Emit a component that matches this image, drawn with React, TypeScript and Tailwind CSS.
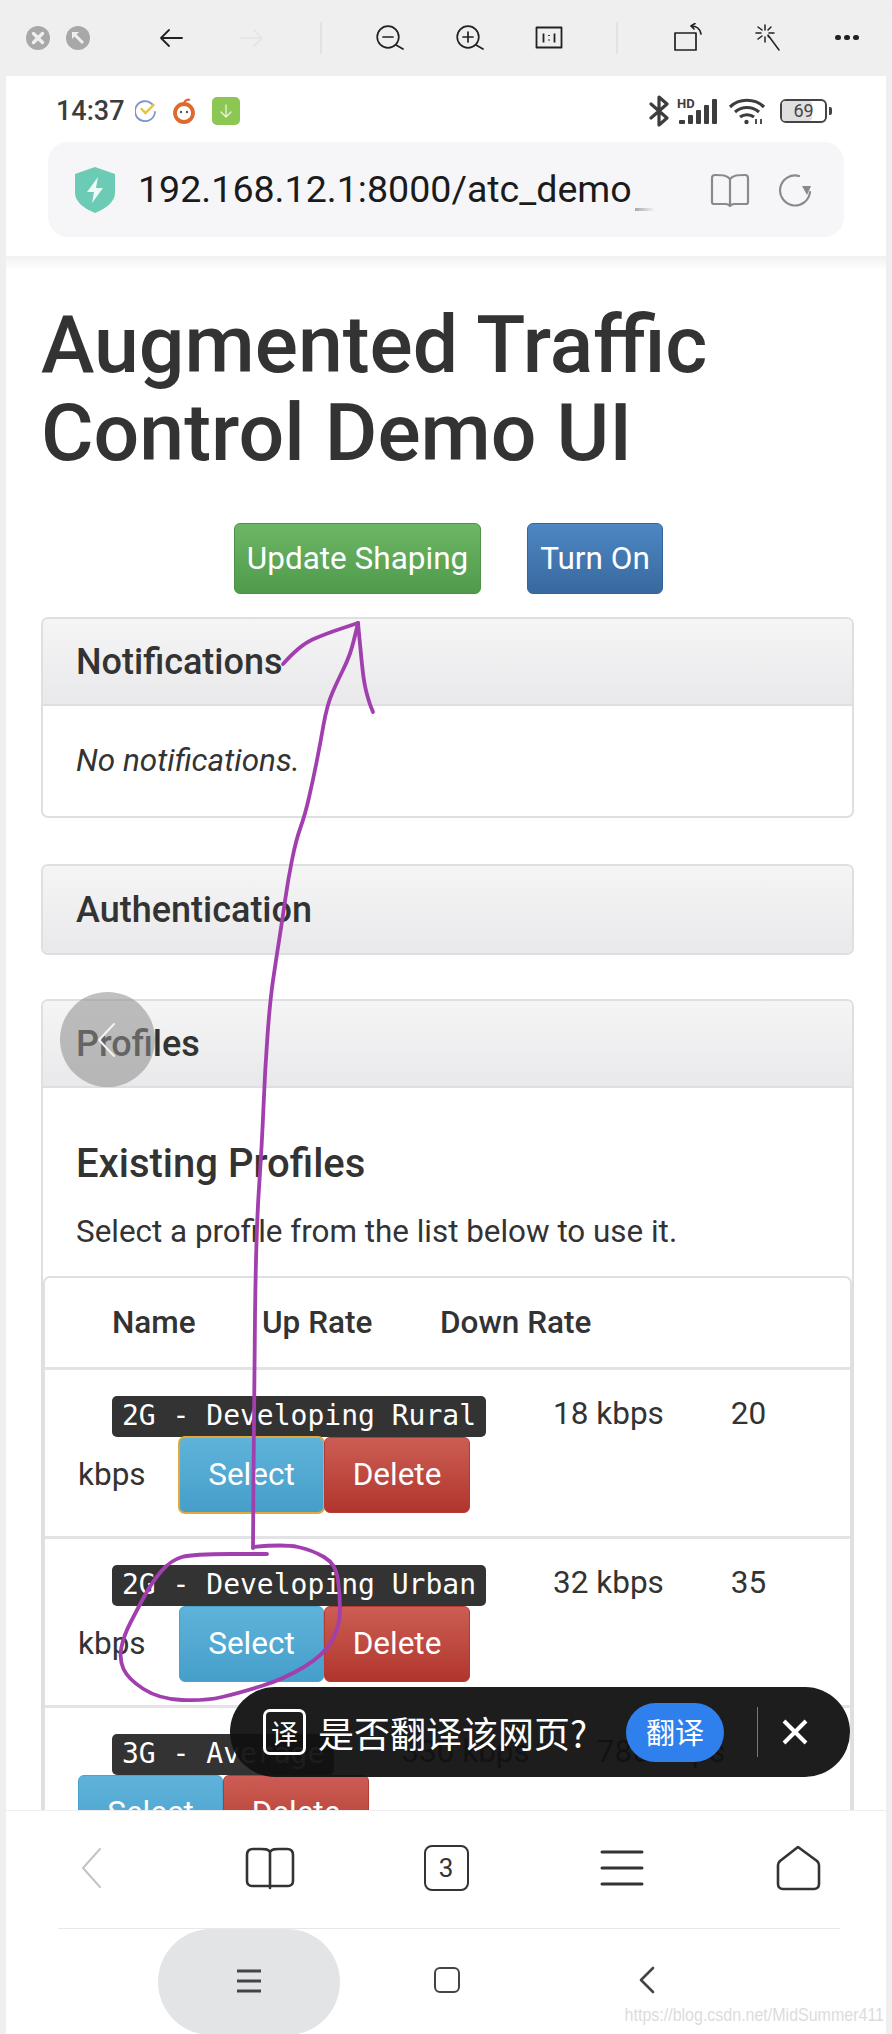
import type { ReactNode } from "react"

const purple = "#a23fae"

// smooth pen stroke through a list of points
function smooth(pts: number[][]) {
  let d = `M${pts[0][0]} ${pts[0][1]}`
  for (let i = 1; i < pts.length - 1; i++) {
    const mx = (pts[i][0] + pts[i + 1][0]) / 2
    const my = (pts[i][1] + pts[i + 1][1]) / 2
    d += ` Q${pts[i][0]} ${pts[i][1]} ${mx} ${my}`
  }
  const last = pts[pts.length - 1]
  return d + ` L${last[0]} ${last[1]}`
}

const stem = [
  [358, 623], [353, 645], [347, 662], [338, 680], [327, 705], [320, 745], [313, 780], [305, 815], [296, 840],
  [288, 880], [282, 922], [276, 960], [270, 1001], [265, 1070], [262, 1143], [256, 1233], [254, 1400], [253, 1548],
]
const loop = [
  [253, 1547], [284, 1544], [312, 1550], [336, 1564], [340, 1595], [340, 1626], [324, 1655], [284, 1679], [239, 1693],
  [205, 1701], [159, 1699], [128, 1679], [119, 1659], [124, 1635], [137, 1610], [152, 1582], [171, 1560], [193, 1554], [267, 1554],
]
const barbLeft = [[283, 664], [300, 645], [325, 634], [358, 623]]
const barbRight = [[358, 623], [361, 655], [364, 683], [369, 702], [373, 712]]

function Ink() {
  return (
    <svg className="absolute left-0 top-0 z-20 pointer-events-none" width={892} height={1810} fill="none" stroke={purple} strokeWidth={3.8} strokeLinecap="round" strokeLinejoin="round">
      <path d={smooth(stem)} />
      <path d={smooth(loop)} />
      <path d={smooth(barbLeft)} />
      <path d={smooth(barbRight)} />
    </svg>
  )
}

function Stroke({ w, h, sw = 2, color = "#222", children }: { w: number; h: number; sw?: number; color?: string; children: ReactNode }) {
  return (
    <svg width={w} height={h} viewBox={`0 0 ${w} ${h}`} fill="none" stroke={color} strokeWidth={sw} strokeLinecap="round" strokeLinejoin="round" className="shrink-0">
      {children}
    </svg>
  )
}

function Toolbar() {
  return (
    <div className="h-[76px] shrink-0 flex items-center pl-[24px] pb-[1px] rounded-t-[14px] bg-[#efefef]">
      <svg width={28} height={28} viewBox="0 0 28 28" className="shrink-0">
        <circle cx="14" cy="14" r="12" fill="#a8a8a8" />
        <path d="M9.5 9.5l9 9M18.5 9.5l-9 9" stroke="#efefef" strokeWidth={3.4} strokeLinecap="round" />
      </svg>
      <svg width={28} height={28} viewBox="0 0 28 28" className="shrink-0 ml-[12px]">
        <circle cx="14" cy="14" r="12" fill="#a8a8a8" />
        <path d="M9 9l10 10" stroke="#efefef" strokeWidth={3} />
        <path d="M8 8h7l-7 7z" fill="#efefef" />
      </svg>
      <div className="ml-[65px]">
        <Stroke w={28} h={24} sw={1.8}><path d="M25 12H5M12 4l-8 8 8 8" /></Stroke>
      </div>
      <div className="ml-[53px]">
        <Stroke w={28} h={24} sw={1.8} color="#e6e6e6"><path d="M3 12h20M16 4l8 8-8 8" /></Stroke>
      </div>
      <div className="ml-[54px] w-[2px] h-[32px] bg-[#e2e2e2]" />
      <div className="ml-[53px]">
        <Stroke w={30} h={28} sw={1.7}>
          <circle cx="13" cy="13" r="10.8" /><path d="M8 13h10M21 21l7 4" />
        </Stroke>
      </div>
      <div className="ml-[50px]">
        <Stroke w={30} h={28} sw={1.7}>
          <circle cx="13" cy="13" r="10.8" /><path d="M8 13h10M13 8v10M21 21l7 4" />
        </Stroke>
      </div>
      <div className="ml-[50px]">
        <Stroke w={28} h={24} sw={1.8}>
          <rect x="1.5" y="1.5" width="25" height="20" /><path d="M8.5 7.5v9M19.5 7.5v9M14 9v1M14 13.5v1" strokeLinecap="butt" />
        </Stroke>
      </div>
      <div className="ml-[53px] w-[2px] h-[32px] bg-[#e2e2e2]" />
      <div className="ml-[55px]">
        <Stroke w={32} h={30} sw={1.7}>
          <rect x="2" y="10" width="21" height="17" /><path d="M18 3c5 0 9 2 10 8M18 3l4-2.5M18 3l3 3" />
        </Stroke>
      </div>
      <div className="ml-[50px]">
        <Stroke w={26} h={28} sw={1.5}>
          <path d="M10 1v5M10 13v5M1 9h5M14 9h5M3 3l4 3M13 12l3 3M16 3l-3 3M3 15l4-3M13 11l11 15" />
        </Stroke>
      </div>
      <div className="ml-[54px] flex gap-[3.5px]">
        <span className="w-[5.5px] h-[5.5px] rounded-full bg-[#222]" />
        <span className="w-[5.5px] h-[5.5px] rounded-full bg-[#222]" />
        <span className="w-[5.5px] h-[5.5px] rounded-full bg-[#222]" />
      </div>
    </div>
  )
}

function StatusBar() {
  return (
    <div className="h-[66px] flex items-center pt-[4px] pl-[50px] pr-[54px]">
      <span className="text-[27px] font-medium text-[#3c3c3c] leading-none">14:37</span>
      <svg width={22} height={24} viewBox="0 0 22 24" className="ml-[10px]" fill="none">
        <path d="M17 5A10 10 0 1 0 20 13" stroke="#8093cf" strokeWidth={1.8} strokeLinecap="round" />
        <path d="M6.5 10l4 4 8-8" stroke="#e8c234" strokeWidth={2.4} strokeLinecap="round" />
      </svg>
      <svg width={24} height={28} viewBox="0 0 24 28" className="ml-[15px]" fill="none">
        <circle cx="12" cy="16" r="9" stroke="#dd6a2c" strokeWidth={3.8} />
        <path d="M12 6c1-3 4-4 6-3" stroke="#dd6a2c" strokeWidth={2.2} />
        <circle cx="9" cy="15" r="1.2" fill="#555" /><circle cx="15" cy="15" r="1.2" fill="#555" />
      </svg>
      <div className="ml-[16px] w-[28px] h-[28px] rounded-[5px] bg-[#8cc653] flex items-center justify-center">
        <Stroke w={16} h={16} sw={1.3} color="#eaf5de"><path d="M8 2v12M3 9l5 5 5-5" /></Stroke>
      </div>
      <div className="ml-auto flex items-center">
        <Stroke w={22} h={32} sw={3.2} color="#3d3d3d"><path d="M3 9l16 14-8 7V2l8 7L3 23" /></Stroke>
        <svg width={42} height={30} viewBox="0 0 42 30" className="ml-[7px]" fill="#3d3d3d">
          <rect x="2" y="24" width="6" height="4" rx="1" />
          <rect x="11" y="19" width="5" height="9" rx="1" />
          <rect x="19" y="14" width="5" height="14" rx="1" />
          <rect x="27" y="9" width="5" height="19" rx="1" />
          <rect x="35" y="3" width="5" height="25" rx="1" />
          <text x="0" y="12" fontSize="13" fontWeight="700" fontFamily="Roboto, sans-serif">HD</text>
        </svg>
        <svg width={38} height={30} viewBox="0 0 38 30" className="ml-[9px]" fill="none" stroke="#3d3d3d" strokeWidth={3.2}>
          <path d="M2 11C11 2 27 2 36 11M7 16c7-6 17-6 24 0M12 21c4-3 10-3 14 0" />
          <circle cx="18.5" cy="26" r="2.2" fill="#3d3d3d" stroke="none" />
          <path d="M28 28v-5M33 23v5" strokeWidth={1.8} />
        </svg>
        <div className="ml-[14px] relative w-[47px] h-[24px] rounded-[6px] border-[2.5px] border-[#444] flex items-center justify-center">
          <span className="absolute left-0 top-0 bottom-0 w-[30px] bg-[#dfdfdf] rounded-[3px]" />
          <span className="relative text-[18px] leading-none text-[#444]">69</span>
        </div>
        <span className="ml-[2px] w-[3px] h-[8px] rounded-r-[2px] bg-[#444]" />
      </div>
    </div>
  )
}

function UrlBar() {
  return (
    <div className="mx-[42px] h-[95px] rounded-[20px] bg-[#f6f6f8] flex items-center pl-[27px] pr-[32px]">
      <svg width={40} height={46} viewBox="0 0 40 46" className="shrink-0">
        <path d="M20 0l20 7v19c0 9-10 16-20 20C10 42 0 35 0 26V7z" fill="#6ccbb4" />
        <path d="M23 10L12 25h7l-2 11 11-15h-7z" fill="#eefaf6" />
      </svg>
      <span className="ml-[23px] text-[37.6px] leading-none text-[#1b1b1b] whitespace-nowrap">192.168.12.1:8000/atc_demo</span>
      <span className="self-end mb-[26px] ml-[3px] w-[20px] h-[3px] bg-linear-to-r from-[#aaa] to-[#f6f6f8]" />
      <div className="ml-auto flex items-center gap-[28px]">
        <Stroke w={40} h={36} sw={2.2} color="#8a8a8a">
          <path d="M20 7c-3-4-8-4-15-4-2 0-3 1-3 3v24c0 1 1 2 2 2h12c2 0 3 1 4 2 1-1 2-2 4-2h12c1 0 2-1 2-2V6c0-2-1-3-3-3-7 0-12 0-15 4zM20 7v26" />
        </Stroke>
        <Stroke w={34} h={36} sw={2.2} color="#8a8a8a">
          <path d="M21 4A15 15 0 1 0 32 20" /><path d="M24 14h9l-4 9z" fill="#8a8a8a" stroke="none" />
        </Stroke>
      </div>
    </div>
  )
}

function Btn({ kind, w, children }: { kind: "green" | "blue" | "info" | "danger"; w: number; children: ReactNode }) {
  const colors = {
    green: "from-[#6db665] to-[#4f9a4c] border-[#4c9146]",
    blue: "from-[#4d87c4] to-[#38699f] border-[#34639a]",
    info: "from-[#5fb3da] to-[#459fca] border-[#49a3cf]",
    danger: "from-[#cc5d54] to-[#b0352c] border-[#b53b32]",
  }[kind]
  return (
    <button style={{ width: w }} className={`h-full shrink-0 rounded-[6px] border bg-linear-to-b ${colors} text-white text-[31.5px] leading-none`}>
      {children}
    </button>
  )
}

function Panel({ title, children }: { title: string; children?: ReactNode }) {
  return (
    <div className="rounded-[7px] border-2 border-[#dedfe2] bg-white overflow-hidden">
      <div className={`h-[87px] flex items-center pl-[33px] bg-linear-to-b from-[#f5f5f6] to-[#e9e9eb] text-[36px] font-medium text-[#333] ${children ? "border-b-2 border-[#dedfe2]" : ""}`}>
        {title}
      </div>
      {children}
    </div>
  )
}

function Code({ children }: { children: ReactNode }) {
  return (
    <code className="h-[41px] px-[10px] rounded-[5px] bg-[#333] text-white text-[28px] leading-[39px] font-['DejaVu_Sans_Mono',monospace] whitespace-nowrap shrink-0">
      {children}
    </code>
  )
}

function Row({ name, up, down, tail, focused }: { name: string; up: string; down: string; tail?: string; focused?: boolean }) {
  return (
    <div className="pt-[26px] pb-[23px] pl-[33px] border-b-[3px] border-[#e3e3e6]">
      <div className="flex items-start h-[41px] pl-[34px] gap-[67px] text-[31.5px] text-[#333] leading-[36px] whitespace-nowrap">
        <Code>{name}</Code>
        <span>{up}</span>
        <span>{down}</span>
      </div>
      <div className="flex items-center h-[76px]">
        {tail && <span className="w-[101px] text-[31.5px] text-[#333]">{tail}</span>}
        <div className={`h-full rounded-[6px] ${focused ? "outline-2 outline-[#e0a93c] -outline-offset-1" : ""}`}>
          <Btn kind="info" w={145}>Select</Btn>
        </div>
        <div className="h-full">
          <Btn kind="danger" w={146}>Delete</Btn>
        </div>
      </div>
    </div>
  )
}

function Page() {
  return (
    <div className="flex-1 relative overflow-hidden pl-[35px] pr-[32px]">
      <h1 className="pt-[31px] text-[80.6px] leading-[88px] font-medium text-[#333]">
        Augmented Traffic
        <br />
        Control Demo UI
      </h1>
      <div className="mt-[46px] h-[71px] pl-[193px] flex gap-[46px]">
        <Btn kind="green" w={247}>Update Shaping</Btn>
        <Btn kind="blue" w={136}>Turn On</Btn>
      </div>
      <div className="mt-[23px]">
        <Panel title="Notifications">
          <div className="h-[110px] flex items-center pl-[33px] text-[31.5px] italic text-[#333]">No notifications.</div>
        </Panel>
      </div>
      <div className="mt-[46px]">
        <Panel title="Authentication" />
      </div>
      <div className="mt-[44px]">
        <Panel title="Profiles">
          <h3 className="pt-[54px] pl-[33px] text-[40px] leading-[44px] font-medium text-[#333]">Existing Profiles</h3>
          <p className="mt-[25px] pl-[33px] text-[31.4px] leading-[42px] text-[#333]">Select a profile from the list below to use it.</p>
          <div className="mt-[23px] rounded-t-[7px] border-2 border-b-0 border-[#dfe0e4]">
            <div className="h-[92px] flex items-center pl-[67px] text-[31.5px] font-medium text-[#333] border-b-[3px] border-[#e3e3e6]">
              <span className="w-[150px]">Name</span>
              <span className="w-[178px]">Up Rate</span>
              <span>Down Rate</span>
            </div>
            <Row name="2G - Developing Rural" up="18 kbps" down="20" tail="kbps" focused />
            <Row name="2G - Developing Urban" up="32 kbps" down="35" tail="kbps" />
            <Row name="3G - Average" up="330 kbps" down="780 kbps" />
          </div>
        </Panel>
      </div>
      <TranslateBar />
    </div>
  )
}

function TranslateBar() {
  return (
    <div className="absolute z-30 left-[224px] top-[1417px] w-[620px] h-[90px] rounded-full bg-[#111]/95 flex items-center pl-[33px] font-['Noto_Sans_CJK_SC',sans-serif]">
      <div className="w-[43px] h-[46px] rounded-[7px] border-[3px] border-white flex items-center justify-center text-white text-[27px] leading-none shrink-0">译</div>
      <span className="ml-[12px] text-[36px] leading-none text-white whitespace-nowrap">是否翻译该网页?</span>
      <div className="ml-[39px] w-[98px] h-[59px] shrink-0 rounded-full bg-[#2f80ed] flex items-center justify-center text-[29px] text-white">翻译</div>
      <div className="ml-[33px] w-[1px] h-[50px] bg-[#777] shrink-0" />
      <div className="ml-[23px]">
        <Stroke w={28} h={28} sw={4} color="#fff"><path d="M3 3l22 22M25 3L3 25" strokeLinecap="butt" /></Stroke>
      </div>
    </div>
  )
}

function BottomNav() {
  return (
    <div className="h-[224px] shrink-0 relative z-40 bg-white rounded-b-[12px] border-t border-[#eeeef0]">
      <div className="h-[117px] grid grid-cols-5 justify-items-center items-center pb-[4px]">
        <div className="mr-[6px]">
          <Stroke w={22} h={42} sw={2} color="#c4c4c6"><path d="M20 2L3 21l17 19" /></Stroke>
        </div>
        <Stroke w={52} h={44} sw={2.6} color="#333">
          <path d="M26 6c-2-3-5-3-9-3H9C5 3 3 5 3 9v26c0 3 2 5 5 5h36c3 0 5-2 5-5V9c0-4-2-6-6-6h-8c-4 0-7 0-9 3zM26 6v36" />
        </Stroke>
        <div className="w-[45px] h-[46px] rounded-[8px] border-[2.6px] border-[#333] flex items-center justify-center text-[26px] text-[#333] leading-none">3</div>
        <Stroke w={44} h={36} sw={3} color="#333"><path d="M2 2h40M2 18h40M2 34h40" /></Stroke>
        <Stroke w={46} h={46} sw={2.6} color="#333">
          <path d="M23 2l19 14c1 1 2 2 2 4v19c0 3-2 5-5 5H8c-3 0-5-2-5-5V20c0-2 1-3 2-4z" />
        </Stroke>
      </div>
      <div className="ml-[52px] mr-[46px] h-[1px] bg-[#e8e8ec]" />
      <div className="flex items-center h-[106px]">
        <div className="ml-[152px] w-[182px] h-full rounded-[70px] bg-[#e3e4e6] flex items-center justify-center pb-[2px]">
          <Stroke w={26} h={24} sw={3} color="#444"><path d="M1 2h24M1 12h24M1 22h24" strokeLinecap="butt" /></Stroke>
        </div>
        <div className="ml-[94px] w-[26px] h-[26px] rounded-[6px] border-[2.6px] border-[#444] mb-[4px]" />
        <div className="ml-[178px] mb-[4px]">
          <Stroke w={18} h={28} sw={2.6} color="#444"><path d="M15 2L3 14l12 12" /></Stroke>
        </div>
      </div>
    </div>
  )
}

export default function App() {
  return (
    <div className="relative w-[892px] h-[2034px] overflow-hidden bg-[#efefef] font-[Roboto,sans-serif]">
      <Toolbar />
      <div className="mx-[6px] h-[1958px] flex flex-col bg-white">
        <div className="h-[180px] shrink-0">
          <StatusBar />
          <UrlBar />
        </div>
        <div className="h-[14px] shrink-0 bg-linear-to-b from-[#f1f1f1] to-white" />
        <Page />
        <BottomNav />
      </div>
      {/* hand drawn arrow and circle over the page */}
      <Ink />
      {/* floating back button */}
      <div className="absolute z-10 left-[60px] top-[992px] w-[95px] h-[95px] rounded-full bg-[#8c8c8c]/55 flex items-center justify-center pr-[4px]">
        <Stroke w={20} h={36} sw={2} color="#f4f4f4"><path d="M18 2L3 18l15 16" /></Stroke>
      </div>
      <span className="absolute z-50 right-[8px] top-[2002px] text-[16px] leading-[26px] scale-y-[1.2] text-[#dcdcdc] font-['Liberation_Sans',sans-serif] whitespace-nowrap">https://blog.csdn.net/MidSummer411</span>
    </div>
  )
}
